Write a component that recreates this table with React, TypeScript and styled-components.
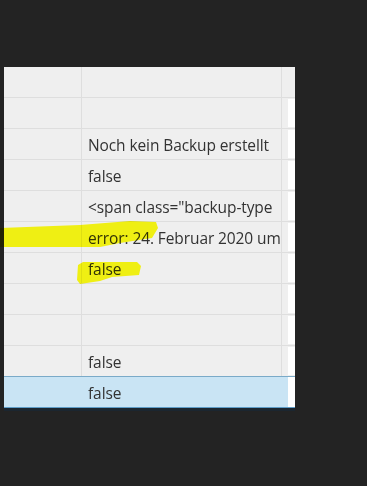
import styled, { createGlobalStyle } from 'styled-components';

const GlobalStyle = createGlobalStyle`
  html, body {
    margin: 0;
    padding: 0;
    background: #232323;
  }
`;

const Page = styled.div`
  position: relative;
  width: 367px;
  height: 486px;
  overflow: hidden;
  background: #232323;
  padding: 67px 0 0 4px;
  box-sizing: border-box;
`;

const Grid = styled.div`
  width: 291px;
  background: #efefef;
  font-family: 'Open Sans', 'Liberation Sans', sans-serif;
  font-size: 15.5px;
  letter-spacing: -0.1px;
  color: #333333;
  box-shadow: 0 3px 0 #1b2630;
`;

const Row = styled.div<{ $selected?: boolean }>`
  display: flex;
  height: ${({ $selected }) => ($selected ? '32px' : '31px')};
  margin-top: ${({ $selected }) => ($selected ? '-1px' : '0')};
  box-sizing: border-box;
  border-bottom: 1px solid ${({ $selected }) => ($selected ? '#5e9dc8' : '#dedede')};
  border-top: ${({ $selected }) => ($selected ? '1px solid #7aaac8' : 'none')};
  background: ${({ $selected }) => ($selected ? '#c9e4f4' : '#efefef')};
`;

const NameCell = styled.div<{ $selected?: boolean }>`
  width: 77px;
  flex-shrink: 0;
  border-right: 1px solid ${({ $selected }) => ($selected ? 'transparent' : '#dedede')};
`;

const ValueCell = styled.div<{ $selected?: boolean }>`
  width: 200px;
  flex-shrink: 0;
  display: flex;
  align-items: center;
  padding: 1px 0 0 6px;
  box-sizing: border-box;
  border-right: 1px solid ${({ $selected }) => ($selected ? 'transparent' : '#dedede')};
  white-space: nowrap;
  overflow: hidden;
`;

const EditCell = styled.div<{ $selected?: boolean }>`
  flex: 1;
  display: flex;
  justify-content: flex-end;
  padding: ${({ $selected }) => ($selected ? '0' : '1px 0')};
  background: ${({ $selected }) => ($selected ? '#c9e4f4' : '#efefef')};
`;

const EditBox = styled.div`
  width: 7px;
  background: #ffffff;
`;

const Marker = styled.svg`
  position: absolute;
  left: 0;
  top: 0;
  width: 367px;
  height: 486px;
  pointer-events: none;
  mix-blend-mode: multiply;
`;

const rows: { value: string; selected?: boolean; header?: boolean }[] = [
  { value: '', header: true },
  { value: '' },
  { value: 'Noch kein Backup erstellt' },
  { value: 'false' },
  { value: '<span class="backup-type' },
  { value: 'error: 24. Februar 2020 um' },
  { value: 'false' },
  { value: '' },
  { value: '' },
  { value: 'false' },
  { value: 'false', selected: true },
];

export default function App() {
  return (
    <Page>
      <GlobalStyle />
      <Grid>
        {rows.map((row, i) => (
          <Row key={i} $selected={row.selected}>
            <NameCell $selected={row.selected} />
            <ValueCell $selected={row.selected}>{row.value}</ValueCell>
            <EditCell $selected={row.selected}>{!row.header && <EditBox />}</EditCell>
          </Row>
        ))}
      </Grid>
      <Marker viewBox="0 0 367 486">
        <polygon
          fill="#ffff14"
          points="0,228 80,225 130,221 156,222 158,228 152,238 120,243 100,247 60,247 0,247"
        />
        <polygon
          fill="#ffff14"
          points="78,265 83,262 137,262 141,266 139,275 112,277 100,281 80,284 77,280"
        />
      </Marker>
    </Page>
  );
}
